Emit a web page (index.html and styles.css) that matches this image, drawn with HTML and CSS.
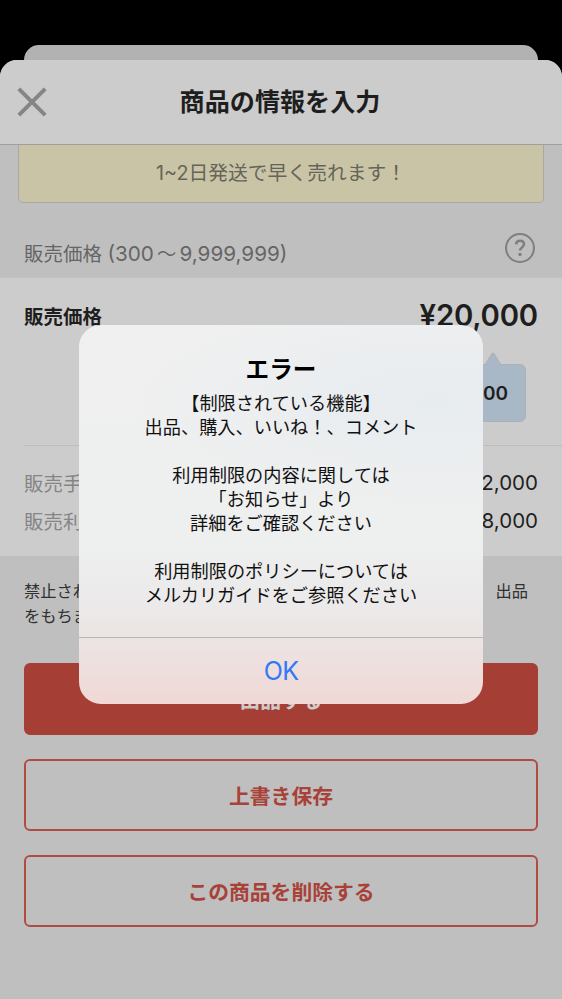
FILE: index.html
```html
<!DOCTYPE html>
<html lang="ja">
<head>
<meta charset="utf-8">
<title>商品の情報を入力</title>
<link rel="stylesheet" href="styles.css">
</head>
<body>
<div class="screen">
  <div class="sheet-behind"></div>
  <main class="sheet">
    <header class="header">
      <svg class="close" viewBox="0 0 30 30"><path d="M1.8 1.8 28.2 28.2M28.2 1.8 1.8 28.2"/></svg>
      <h1 class="title">商品の情報を入力</h1>
    </header>
    <div class="notice">1~2日発送で早く売れます！</div>
    <div class="section-head">
      <span class="range">販売価格 <span class="num">(300</span><span class="wave">～</span><span class="num">9,999,999)</span></span>
      <svg class="help" viewBox="0 0 32 32"><circle cx="16" cy="16" r="14"/><path d="M12.1 12.4C12.2 10 13.8 8.8 16 8.8s4 1.3 4 3.5c0 3-3.9 3.2-3.9 6.2"/><circle class="dot" cx="16" cy="22.4" r="1.7"/></svg>
    </div>
    <section class="price">
      <div class="price-row">
        <span class="price-label">販売価格</span>
        <span class="price-value">¥20,000</span>
      </div>
      <div class="hint">
        <svg class="hint-tip" viewBox="0 0 18 14"><path class="tip-fill" d="M1 14 8 1.8Q9 .5 10 1.8L17 14Z"/><path class="tip-line" d="M1 13 8 1.8Q9 .5 10 1.8L17 13"/></svg>
        ¥20,000
      </div>
      <div class="fees">
        <div class="fee"><span class="fee-label">販売手数料</span><span>¥2,000</span></div>
        <div class="fee"><span class="fee-label">販売利益</span><span>¥18,000</span></div>
      </div>
    </section>
    <div class="terms">
      <div class="terms-line"><span>禁止されている</span><span class="terms-end">出品</span></div>
      <div class="terms-line"><span>をもちます</span></div>
    </div>
    <div class="actions">
      <button class="btn btn-primary">出品する</button>
      <button class="btn">上書き保存</button>
      <button class="btn">この商品を削除する</button>
    </div>
  </main>
  <div class="dialog" role="alertdialog">
    <div class="dialog-body">
      <h2 class="dialog-title">エラー</h2>
      <p class="dialog-text">【制限されている機能】<br>出品、購入、いいね！、コメント<br><br>利用制限の内容に関しては<br>「お知らせ」より<br>詳細をご確認ください<br><br>利用制限のポリシーについては<br>メルカリガイドをご参照ください</p>
    </div>
    <button class="dialog-ok">OK</button>
  </div>
</div>
</body>
</html>
```
FILE: styles.css
```css
* { box-sizing: border-box; }
body {
  margin: 0;
  background: #000;
  font-family: Inter, "Noto Sans CJK JP", sans-serif;
  color: #1e1e1e;
}
h1, h2, p { margin: 0; }
button { font: inherit; padding: 0; }
.screen {
  position: relative;
  width: 562px;
  height: 999px;
  padding-top: 45px;
  overflow: hidden;
}
.sheet-behind {
  height: 35px;
  margin: 0 24px -20px;
  border-radius: 15px 15px 0 0;
  background: #b2b2b2;
}
.sheet {
  position: relative;
  height: 939px;
  border-radius: 17px 17px 0 0;
  background: #bfbfbf;
  overflow: hidden;
}
.header {
  display: grid;
  grid-template-columns: 64px 1fr 66px;
  align-items: center;
  height: 85px;
  background: #ccc;
  border-bottom: 1px solid #9f9f9f;
}
.close {
  width: 30px;
  height: 30px;
  margin-left: 17px;
  stroke: #858586;
  stroke-width: 4;
}
.title {
  font-size: 25.1px;
  line-height: 36px;
  font-weight: 700;
  text-align: center;
  white-space: nowrap;
}
.notice {
  height: 58px;
  margin: 0 18px;
  border: 1px solid #a8a8a6;
  border-top: 0;
  border-radius: 0 0 5px 5px;
  background: #c9c4a5;
  color: #666459;
  font-size: 19.8px;
  line-height: 56px;
  text-align: center;
}
.section-head {
  display: flex;
  align-items: center;
  justify-content: space-between;
  height: 74px;
  padding: 17px 26px 0 24px;
}
.range {
  padding-top: 10px;
  color: #656565;
  font-size: 19.5px;
  line-height: 28px;
  white-space: nowrap;
}
.num { font-size: 20.7px; }
.wave { margin: 0 3px; }
.help {
  width: 32px;
  height: 32px;
  margin-top: -1px;
  fill: none;
  stroke: #7f7f7f;
  stroke-width: 2;
}
.help path { stroke-width: 2.5; }
.help .dot { fill: #7f7f7f; stroke: none; }
.price {
  height: 279px;
  padding: 0 24px;
  border-top: 1px solid #c1c1c1;
  background: #ccc;
}
.price-row {
  display: flex;
  justify-content: space-between;
  align-items: center;
  height: 75px;
}
.price-label { font-size: 19.5px; font-weight: 700; }
.price-value { font-size: 29.3px; font-weight: 600; letter-spacing: -.2px; }
.hint {
  position: relative;
  width: 120px;
  height: 58px;
  margin: 11px 12px 0 auto;
  padding-right: 17px;
  border: 1px solid #abb1b5;
  border-radius: 6px;
  background: #a8b8c6;
  font-size: 19px;
  font-weight: 600;
  line-height: 57px;
  text-align: right;
}
.hint-tip {
  position: absolute;
  top: -13px;
  right: 23px;
  width: 18px;
  height: 14px;
}
.tip-fill { fill: #a8b8c6; }
.tip-line { fill: none; stroke: #adb2b5; stroke-width: 1.3; }
.fees {
  margin: 23px -24px 0 0;
  padding: 18px 24px 0 0;
  border-top: 1px solid #bdbdbd;
}
.fee {
  display: flex;
  justify-content: space-between;
  align-items: center;
  height: 37.5px;
  font-size: 20.5px;
}
.fee-label { color: #858585; font-size: 19.5px; }
.terms {
  height: 107px;
  padding: 23px 34px 0 24px;
  color: #303030;
  font-size: 16.3px;
  line-height: 25px;
}
.terms-line { display: flex; justify-content: space-between; }
.actions {
  display: flex;
  flex-direction: column;
  gap: 24px;
  padding: 0 24px;
}
.btn {
  height: 72px;
  border: 2px solid #b14c44;
  border-radius: 6px;
  background: none;
  color: #a84138;
  font-size: 20.8px;
  font-weight: 700;
}
.btn-primary { background: #a53f36; border-color: #a53f36; color: #ccc; }
.dialog {
  position: absolute;
  top: 325px;
  left: 79px;
  width: 404px;
  height: 379px;
  border-radius: 22px;
  overflow: hidden;
  background:
    radial-gradient(ellipse 300px 110px at 88% 20%, rgba(229, 235, 240, .8), rgba(229, 235, 240, 0)),
    linear-gradient(#f0f0f0 0%, #eeefef 58%, #ebe9e9 75%, #ece4e3 83%, #f0d8d6 100%);
  color: #000;
  text-align: center;
}
.dialog-body {
  height: 313px;
  padding-top: 29px;
  border-bottom: 1px solid #bbb4b4;
}
.dialog-title { font-size: 23.6px; line-height: 32px; font-weight: 700; }
.dialog-text {
  margin-top: 5px;
  color: #111;
  font-size: 18.2px;
  line-height: 24px;
  white-space: nowrap;
}
.dialog-ok {
  width: 100%;
  height: 66px;
  border: 0;
  background: none;
  color: #3478f6;
  font-size: 25px;
  letter-spacing: -.8px;
}
```
